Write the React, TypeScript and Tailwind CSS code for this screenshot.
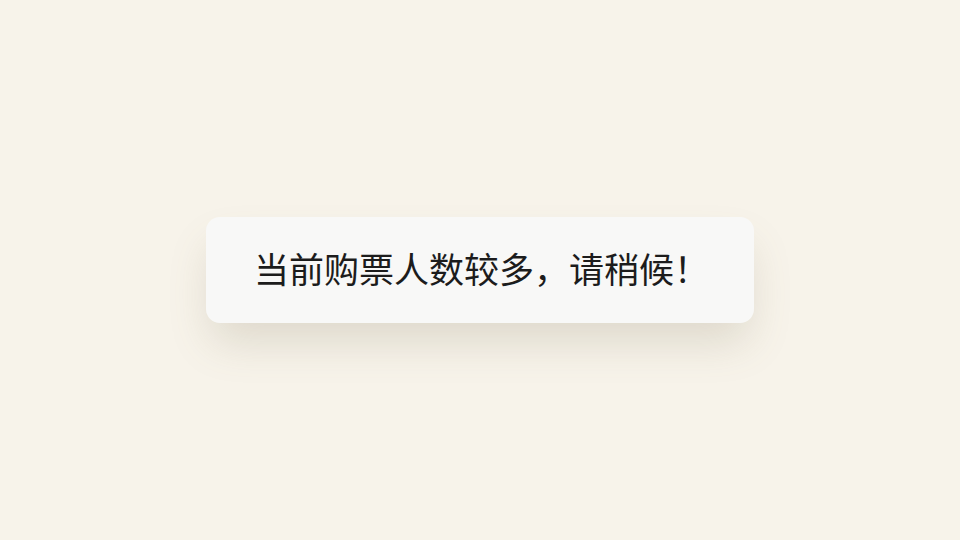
export default function App() {
  return (
    <div className="w-[960px] h-[540px] bg-[#f7f3ea] flex items-center justify-center font-['Noto_Sans_CJK_SC','Noto_Sans',sans-serif]">
      <div className="w-[548px] h-[106px] rounded-[14px] bg-[#f8f8f7] shadow-[0_24px_44px_-6px_rgba(120,110,80,0.2)] flex items-center justify-center">
        <span className="text-[35px] leading-none text-[#1c1c1c] pl-[3px] pb-[6px]">当前购票人数较多，请稍候！</span>
      </div>
    </div>
  );
}
